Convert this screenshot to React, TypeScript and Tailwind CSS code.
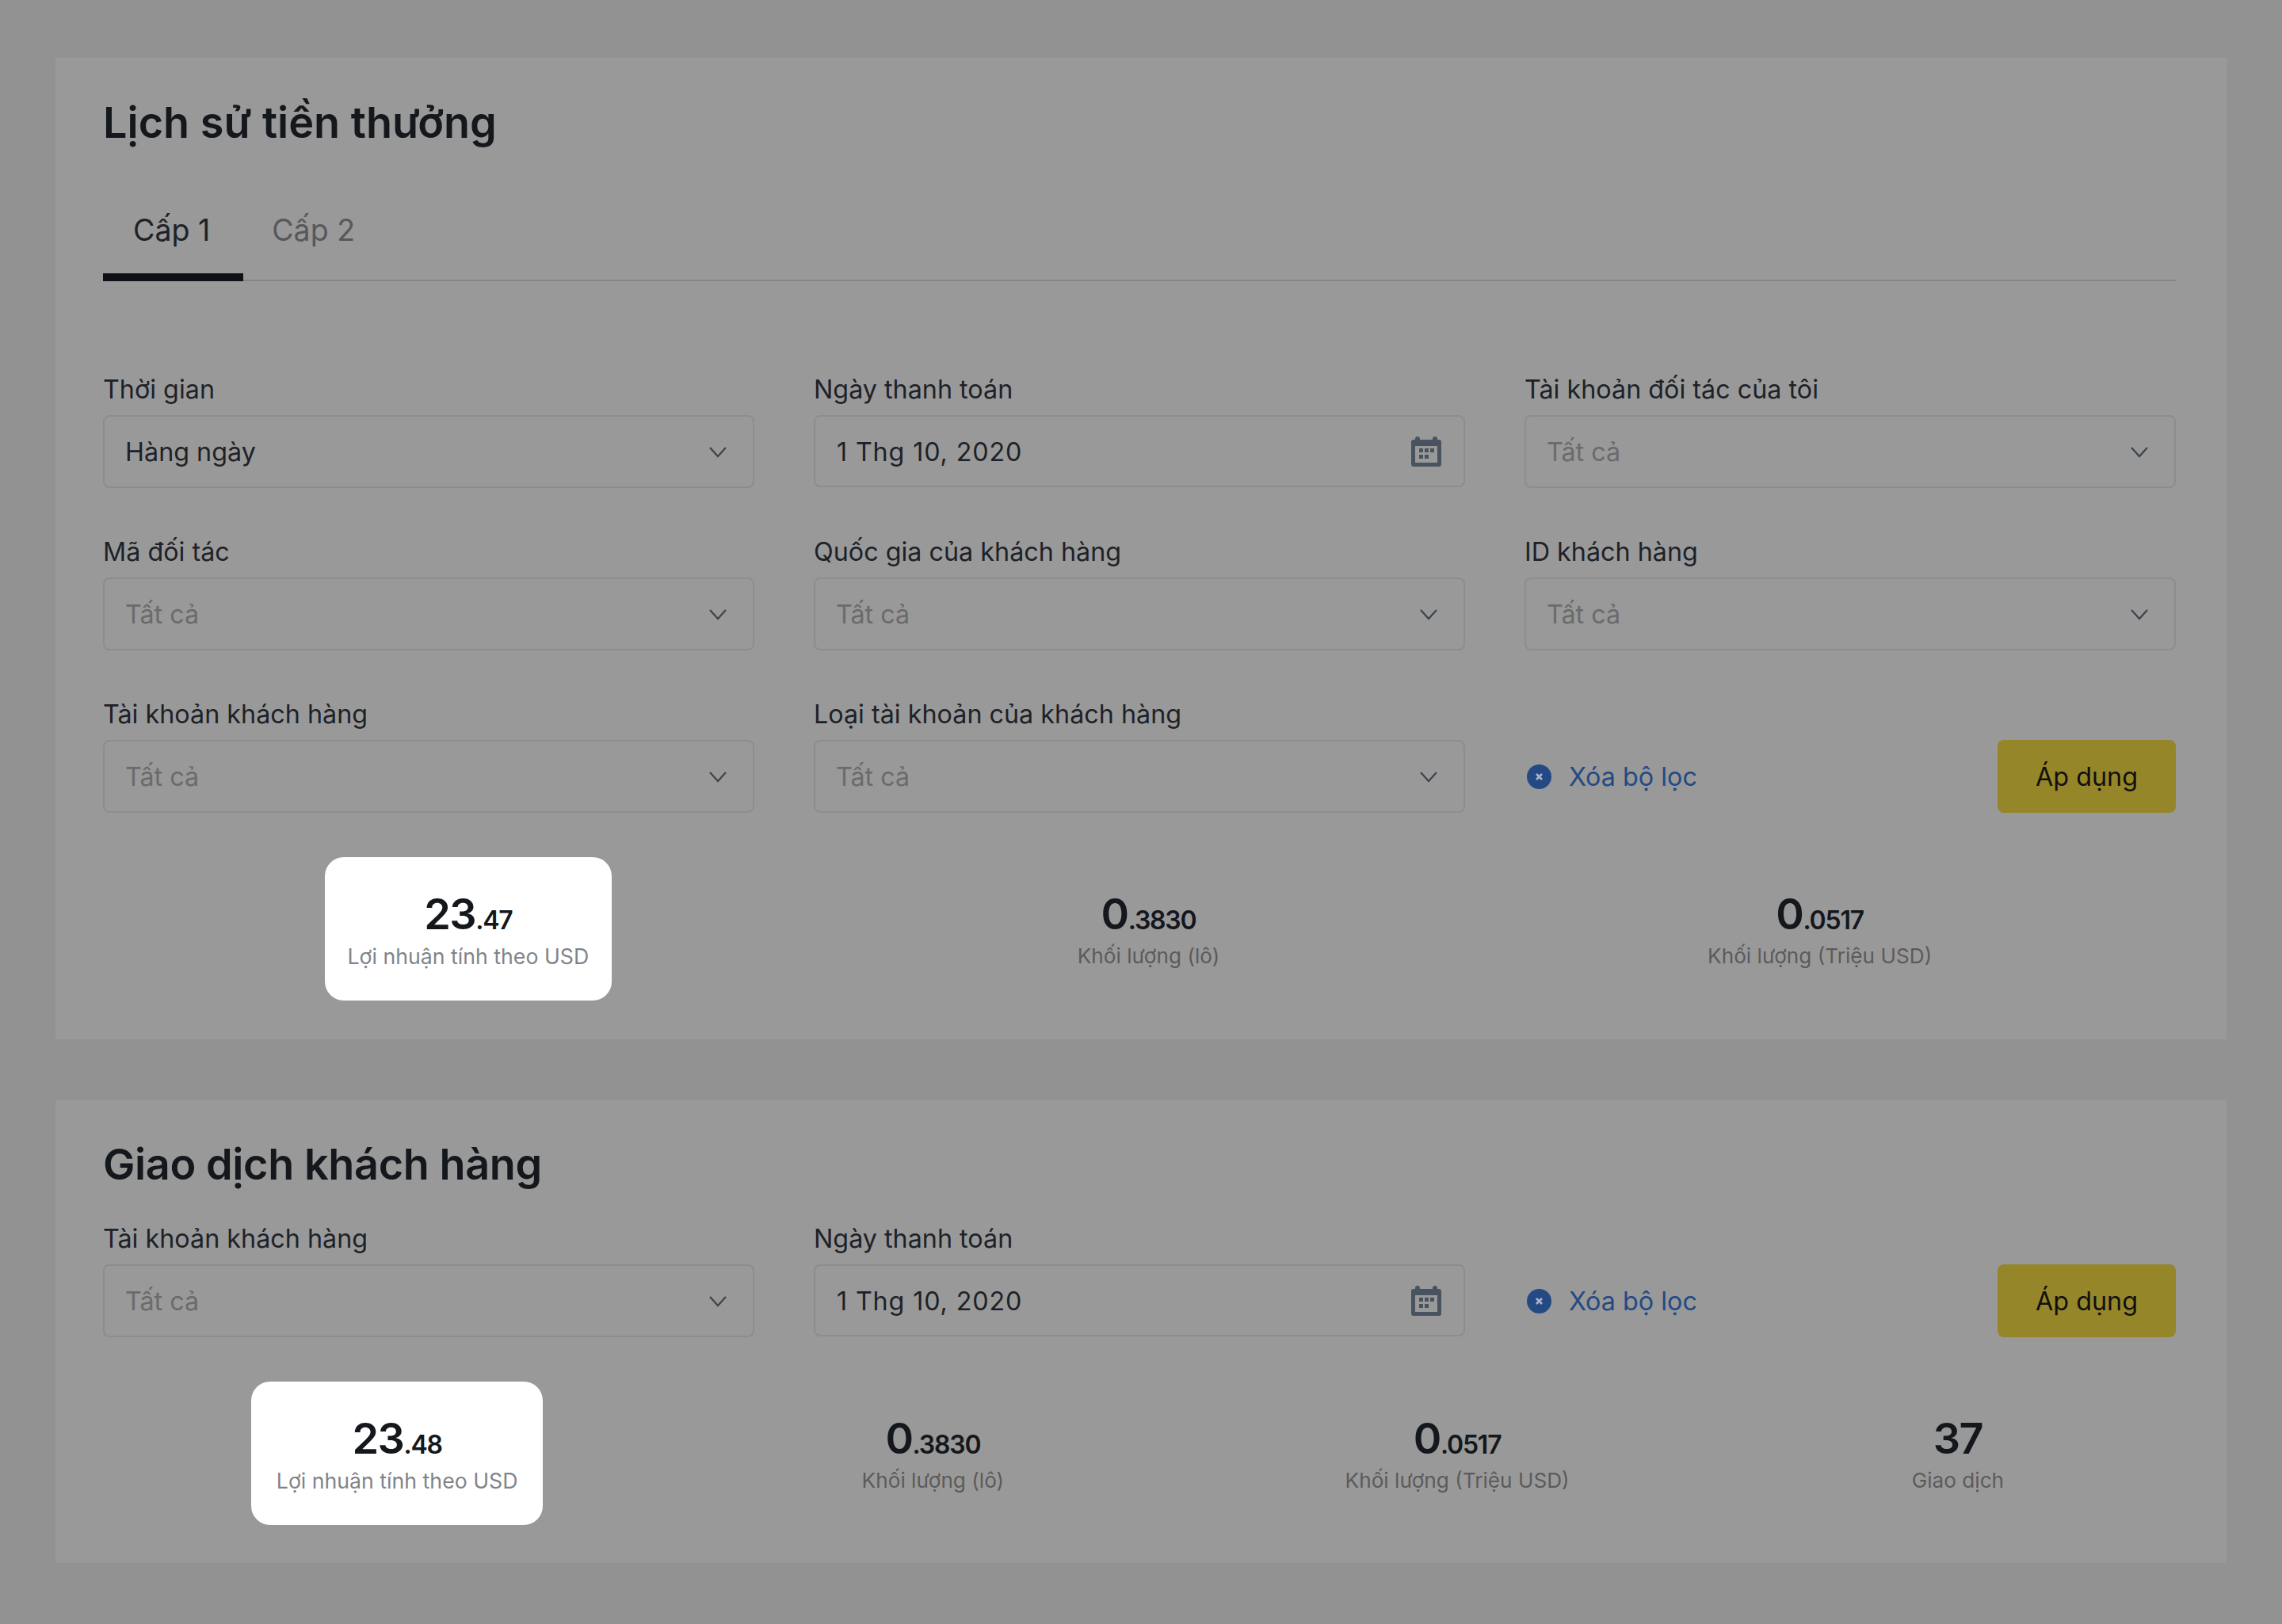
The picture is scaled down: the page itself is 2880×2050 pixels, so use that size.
const Chevron = () => (
    <svg className="w-[24px] h-[15px] shrink-0" viewBox="0 0 24 15" fill="none">
        <path d="M2 2l10 11L22 2" stroke="#3c444c" strokeWidth="2.2" />
    </svg>
);

const CalendarIcon = () => (
    <svg className="w-[38px] h-[38px] shrink-0" viewBox="0 0 38 38">
        <path
            fillRule="evenodd"
            fill="#48535f"
            d="M8 0a3 3 0 0 1 3 3v1h16V3a3 3 0 0 1 6 0v1h2a3 3 0 0 1 3 3v28a3 3 0 0 1-3 3H3a3 3 0 0 1-3-3V7a3 3 0 0 1 3-3h2V3a3 3 0 0 1 3-3zM5 12v21h28V12z"
        />
        <rect x="10" y="15" width="5" height="5" fill="#48535f" />
        <rect x="17" y="15" width="5" height="5" fill="#48535f" />
        <rect x="24" y="15" width="5" height="5" fill="#48535f" />
        <rect x="10" y="23" width="5" height="5" fill="#48535f" />
        <rect x="17" y="23" width="5" height="5" fill="#48535f" />
    </svg>
);

const ClearIcon = () => (
    <svg className="w-[31px] h-[31px] shrink-0" viewBox="0 0 31 31">
        <circle cx="15.5" cy="15.5" r="15.5" fill="#234a85" />
        <path d="M12 12l7 7M19 12l-7 7" stroke="#a9b4c6" strokeWidth="2.6" />
    </svg>
);

const Field = ({ label, value, date }: { label: string; value?: string; date?: boolean }) => (
    <div className="flex flex-col">
        <div className="h-[48px] mb-[10px] text-[32.3px] leading-[52px] text-[#1d2228]">{label}</div>
        <div
            className={`flex items-center justify-between border-2 border-[#8d8d8d] rounded-[8px] ${
                date ? 'h-[91px] pl-[27px] pr-[28px]' : 'h-[92px] pl-[26px] pr-[32px]'
            }`}
        >
            <span
                className={`pt-[3px] text-[32.3px] ${date ? 'tracking-[0.85px]' : ''} ${
                    value ? 'text-[#1d2228]' : 'text-[#6b6b6b]'
                }`}
            >
                {value ?? 'Tất cả'}
            </span>
            {date ? <CalendarIcon /> : <Chevron />}
        </div>
    </div>
);

const ClearAndApply = () => (
    <div className="flex items-end justify-between h-[150px]">
        <div className="flex items-center h-[92px] pl-[3px] gap-[22px] text-[32.3px] text-[#234a85]">
            <ClearIcon />
            <span className="pt-[3px]">Xóa bộ lọc</span>
        </div>
        <button className="w-[225px] h-[92px] pt-[3px] rounded-[8px] bg-[#958629] text-[32.3px] text-[#101010]">
            Áp dụng
        </button>
    </div>
);

const Stat = ({
    whole,
    frac,
    label,
    active,
    width,
}: {
    whole: string;
    frac?: string;
    label: string;
    active?: boolean;
    width: string;
}) => (
    <div
        className={`flex flex-col items-center h-[181px] pt-[36px] ${width} ${
            active ? 'bg-white rounded-[24px]' : ''
        }`}
    >
        <div className="h-[71px] leading-[72px] font-semibold text-[#14181d]">
            <span className="text-[54px] tracking-[-1.5px]">{whole}</span>
            {frac && <span className="text-[32px] tracking-[-1.2px]">{frac}</span>}
        </div>
        <div
            className={`leading-[36px] ${
                active ? 'text-[26.7px] text-[#7f848a]' : 'text-[26.2px] text-[#5b5b5b]'
            }`}
        >
            {label}
        </div>
    </div>
);

export default function App() {
    return (
        <div className="w-[2880px] h-[2050px] bg-[#929292] px-[70px] pt-[73px] font-[Inter,sans-serif]">
            <section className="bg-[#999999] pl-[60px] pr-[64px] pt-[50px] pb-[49px]">
                <h1 className="text-[54px] leading-[64px] font-semibold text-[#14181d]">Lịch sử tiền thưởng</h1>
                <div className="flex h-[90px] mt-[78px] border-b-2 border-[#858585]">
                    <div className="h-[90px] pl-[38px] pr-[42px] border-b-[10px] border-[#0e1216] text-[37.5px] leading-[52px] text-[#1d2228]">
                        Cấp 1
                    </div>
                    <div className="pl-[36px] text-[37.5px] leading-[52px] text-[#55595e]">Cấp 2</div>
                </div>
                <div className="grid grid-cols-3 gap-x-[75px] gap-y-[55px] mt-[111px]">
                    <Field label="Thời gian" value="Hàng ngày" />
                    <Field label="Ngày thanh toán" value="1 Thg 10, 2020" date />
                    <Field label="Tài khoản đối tác của tôi" />
                    <Field label="Mã đối tác" />
                    <Field label="Quốc gia của khách hàng" />
                    <Field label="ID khách hàng" />
                    <Field label="Tài khoản khách hàng" />
                    <Field label="Loại tài khoản của khách hàng" />
                    <ClearAndApply />
                </div>
                <div className="flex justify-around mt-[56px]">
                    <Stat whole="23" frac=".47" label="Lợi nhuận tính theo USD" active width="w-[362px]" />
                    <Stat whole="0" frac=".3830" label="Khối lượng (lô)" width="w-[236px]" />
                    <Stat whole="0" frac=".0517" label="Khối lượng (Triệu USD)" width="w-[339px]" />
                </div>
            </section>

            <section className="bg-[#999999] mt-[77px] pl-[60px] pr-[64px] pt-[49px] pb-[48px]">
                <h1 className="text-[54px] leading-[64px] font-semibold tracking-[-0.4px] text-[#14181d]">
                    Giao dịch khách hàng
                </h1>
                <div className="grid grid-cols-3 gap-x-[75px] mt-[36px]">
                    <Field label="Tài khoản khách hàng" />
                    <Field label="Ngày thanh toán" value="1 Thg 10, 2020" date />
                    <ClearAndApply />
                </div>
                <div className="flex justify-around mt-[56px]">
                    <Stat whole="23" frac=".48" label="Lợi nhuận tính theo USD" active width="w-[368px]" />
                    <Stat whole="0" frac=".3830" label="Khối lượng (lô)" width="w-[236px]" />
                    <Stat whole="0" frac=".0517" label="Khối lượng (Triệu USD)" width="w-[339px]" />
                    <Stat whole="37" label="Giao dịch" width="w-[176px]" />
                </div>
            </section>
        </div>
    );
}
